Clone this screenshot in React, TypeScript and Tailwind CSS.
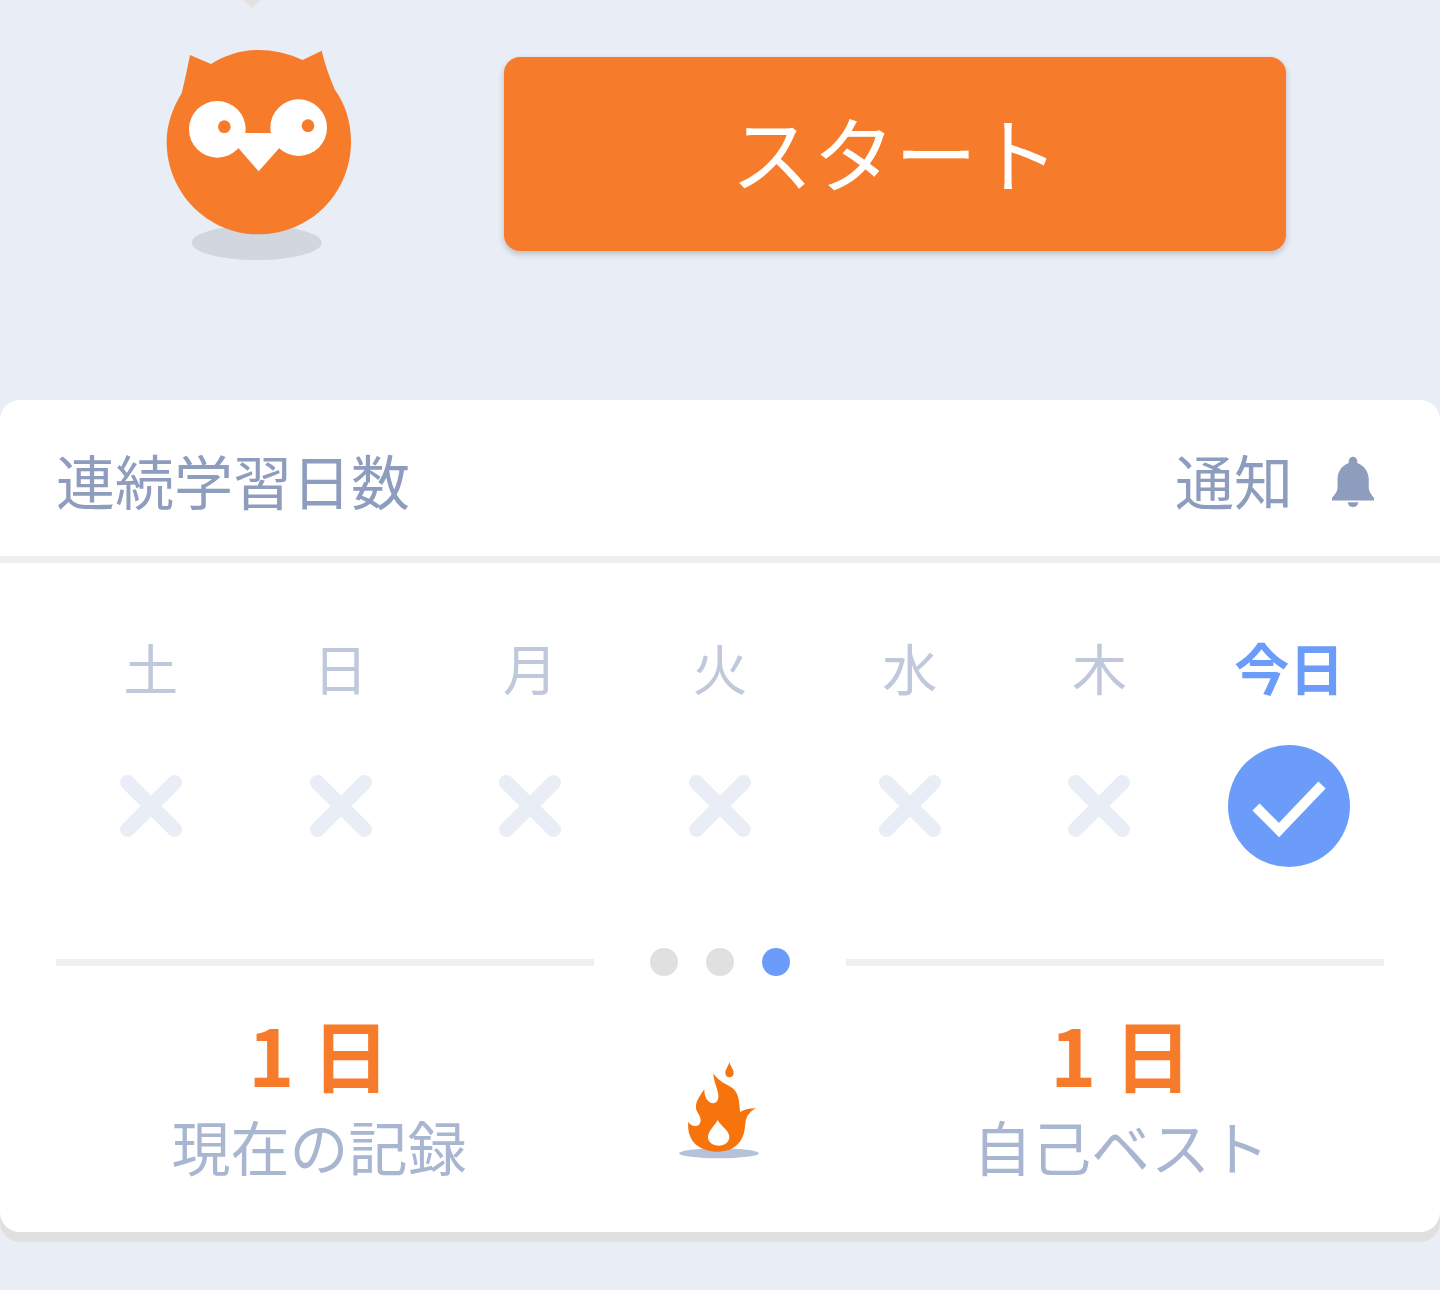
const days = ["土", "日", "月", "火", "水", "木"];

function Owl() {
  return (
    <svg width="200" height="220" viewBox="60 120 600 660" className="block">
      <ellipse cx="350" cy="728" rx="195" ry="52" fill="#d1d6df" />
      <path
        d="M150 165 L213 192 C255 165 305 150 355 150 C400 150 445 160 488 180 L545 152 C555 195 570 235 585 270 C615 310 633 365 633 425 C633 580 510 703 355 703 C205 703 80 580 80 425 C80 375 97 325 125 280 C135 240 142 205 150 165 Z"
        fill="#f67c2c"
      />
      <circle cx="232" cy="388" r="85" fill="#fff" />
      <circle cx="476" cy="383" r="85" fill="#fff" />
      <path d="M300 399 L415 399 L418 444 L356 514 L295 444 Z" fill="#fff" />
      <circle cx="253" cy="380" r="19" fill="#f67c2c" />
      <circle cx="504" cy="377" r="19" fill="#f67c2c" />
    </svg>
  );
}

function Bell() {
  return (
    <svg width="44" height="54" viewBox="510 75 134 160" className="block">
      <path
        d="M564 92 C564 84 570 78 577 78 C584 78 590 84 590 92 L590 97 C610 104 624 122 625 146 L625 170 C625 184 633 194 641 203 L641 211 L513 211 L513 203 C521 194 530 184 530 170 L530 146 C530 122 544 104 564 97 Z"
        fill="#8e9dbd"
      />
      <path d="M561 217 L593 217 C592 227 585 232 577 232 C569 232 562 227 561 217 Z" fill="#8e9dbd" />
    </svg>
  );
}

function Flame() {
  return (
    <svg width="84" height="100" viewBox="114 60 246 300" className="block">
      <ellipse cx="237" cy="340" rx="120" ry="15" fill="#b6c2d9" />
      <path
        fillRule="evenodd"
        d="M145 245 C152 258 168 262 177 254 C187 243 180 228 172 216 C162 198 170 180 193 148 C192 168 202 190 220 190 C236 188 238 170 232 150 C227 132 220 118 220 100 C234 124 262 134 280 146 C298 162 298 190 300 216 C314 208 330 205 348 205 C330 214 318 228 316 250 C314 272 312 292 296 310 C280 328 258 335 237 335 C212 335 188 330 168 314 C150 298 142 272 145 245 Z M233 240 C224 258 204 272 204 292 C204 306 218 317 236 317 C254 317 268 306 268 291 C268 272 244 260 233 240 Z"
        fill="#f7730c"
      />
      <path d="M268 66 C272 80 281 88 281 99 C281 107 275 112 268 112 C261 112 256 106 256 98 C256 88 265 80 268 66 Z" fill="#f7730c" />
    </svg>
  );
}

function Cross() {
  return (
    <svg width="64" height="64" viewBox="0 0 64 64" className="block">
      <path d="M8.5 8.5 L55.5 55.5 M55.5 8.5 L8.5 55.5" stroke="#e9edf5" strokeWidth="15" strokeLinecap="round" />
    </svg>
  );
}

function Stat({ label }: { label: string }) {
  return (
    <div className="w-[526px] flex flex-col items-center">
      <div className="text-[78px] leading-[96px] font-bold text-[#f67c2c]">1 日</div>
      <div className="mt-[5px] text-[59px] leading-[80px] text-[#a9b6d1]">{label}</div>
    </div>
  );
}

export default function App() {
  return (
    <div className="h-[1290px] overflow-hidden bg-[#e8edf6] font-['Noto_Sans_CJK_JP',sans-serif]">
      {/* top area */}
      <div className="h-[400px] flex items-start">
        <div className="ml-[160px] w-[200px]">
          <svg width="18" height="8" viewBox="0 0 18 8" className="block ml-[83px]">
            <path d="M0 0 L18 0 L9 8 Z" fill="#e2e2e2" />
          </svg>
          <div className="mt-[32px]">
            <Owl />
          </div>
        </div>
        <button className="ml-[144px] mt-[57px] w-[782px] h-[194px] pb-[7px] rounded-[16px] bg-[#f67c2c] text-white text-[82px] leading-none shadow-[0_3px_6px_rgba(0,0,0,0.2)]">
          スタート
        </button>
      </div>

      {/* card */}
      <div className="h-[832px] bg-white rounded-[20px] shadow-[0_10px_0_#e0e0e0]">
        <div className="h-[163px] border-b-[7px] border-[#efefef] pt-[2px] pl-[56px] pr-[65px] flex items-center justify-between">
          <div className="text-[59px] leading-none text-[#8e9dbd]">連続学習日数</div>
          <div className="flex items-center gap-[38px]">
            <span className="text-[59px] leading-none text-[#8e9dbd]">通知</span>
            <div className="mt-[6px]">
              <Bell />
            </div>
          </div>
        </div>

        <div className="px-[56px] pt-[73px] grid grid-cols-7">
          {days.map((d) => (
            <div key={d} className="flex flex-col items-center">
              <div className="h-[60px] text-[55px] leading-[60px] text-[#bfc9db]">{d}</div>
              <div className="h-[122px] mt-[49px] flex items-center justify-center">
                <Cross />
              </div>
            </div>
          ))}
          <div className="flex flex-col items-center">
            <div className="h-[60px] text-[55px] leading-[60px] font-bold text-[#6b9cf9]">今日</div>
            <div className="h-[122px] w-[122px] mt-[49px] rounded-full bg-[#6b9cf9]">
              <svg width="122" height="122" viewBox="0 0 122 122" className="block">
                <path d="M28 62 L51 85 L94 40" stroke="#fff" strokeWidth="10" fill="none" />
              </svg>
            </div>
          </div>
        </div>

        <div className="mt-[81px] px-[56px] flex items-center">
          <div className="flex-1 h-[7px] bg-[#efefef]" />
          <div className="mx-[56px] flex gap-[28px]">
            <div className="w-[28px] h-[28px] rounded-full bg-[#e0e0e0]" />
            <div className="w-[28px] h-[28px] rounded-full bg-[#e0e0e0]" />
            <div className="w-[28px] h-[28px] rounded-full bg-[#6b9cf9]" />
          </div>
          <div className="flex-1 h-[7px] bg-[#efefef]" />
        </div>

        <div className="mt-[29px] px-[56px] flex items-start justify-between">
          <Stat label="現在の記録" />
          <div className="mt-[55px] mr-[2px]">
            <Flame />
          </div>
          <Stat label="自己ベスト" />
        </div>
      </div>
    </div>
  );
}
